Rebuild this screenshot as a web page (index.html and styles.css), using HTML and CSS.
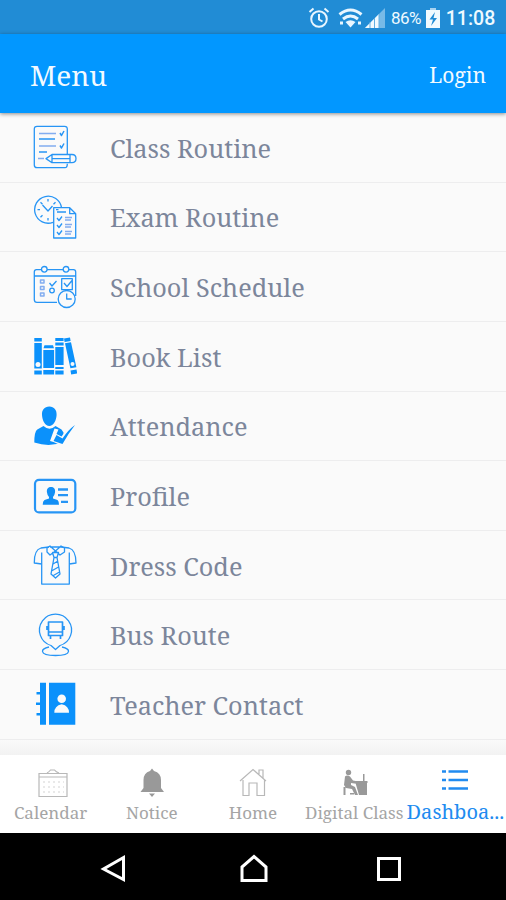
FILE: index.html
```html
<!DOCTYPE html>
<html lang="en">
<head>
<meta charset="utf-8">
<title>Menu</title>
<link rel="stylesheet" href="styles.css">
</head>
<body>
<div class="status">
  <svg class="alarm" width="22" height="22" viewBox="0 0 22 22" fill="none" stroke="#e9f6ff" stroke-width="2"><circle cx="11" cy="12" r="7.8"/><path d="M11 7v5.500l3.500 2M1.500 5l4-3.500M20.500 5l-4-3.500"/></svg>
  <svg class="wifi" width="25" height="22" viewBox="0 0 25 22" fill="none" stroke="#e9f6ff" stroke-width="3"><path d="M1.500 7.500Q12.500-1.500 23.500 7.500M5 12q7.500-6 15 0"/><path d="M7.500 15q5-3.500 10 0l-5 5.500z" fill="#e9f6ff" stroke="none"/><path d="M2 16h3M20 16h3"/></svg>
  <svg class="signal" width="20" height="20" viewBox="0 0 20 20"><path d="M20 0v20H0z" fill="#78bae7"/><path d="M14 6v14H0z" fill="#f1faff"/><path d="M5 14v6M9.500 10v10M14 6v14" stroke="#61afe2"/></svg>
  <span class="percent">86%</span>
  <svg class="battery" width="14" height="20" viewBox="0 0 14 20"><path d="M4 0h6v2H4z" fill="#a8d3f0"/><path d="M0 2h14v18H0z" fill="#f1faff"/><path d="M9 4L3.500 11.500H7L5 18l6-8H7.500z" fill="#218cd5"/></svg>
  <span class="clock">11:08</span>
</div>
<header class="header"><h1 class="title">Menu</h1><span class="login">Login</span></header>
<main class="list">
  <div class="row"><svg class="icon" viewBox="0 0 44 44"><path d="M34.300 29V4q0-2.700-2.700-2.700H4Q1.300 1.300 1.300 4v36q0 2.700 2.700 2.700h28q2.300 0 2.300-4"/><path d="M6 14h16M6 27h8" stroke-width="1.600"/><path class="soft" d="M6 8.500h17M6 21h17M5 33.500h6"/><path d="M27 8l1.500 2.500L31 6M27 20.500l1.500 2.500 2.500-4.500" stroke-width="1.500"/><path d="M13 33.600l6-4.100h20q4 0 4 4.100t-4 4.100H19zM19 29.500v8.200M37 29.500v8.200M19 33.600h18"/></svg><span class="label">Class Routine</span></div>
  <div class="row"><svg class="icon" viewBox="0 0 44 44"><path d="M20 27.300a13.500 13.500 0 1 1 8.500-14.600"/><path d="M15 4v2.500M15 23v2.500M4.500 14.700H7M23 14.700h2.500M7.500 7.200l2 2M22.500 7.200l-2 2M7.500 22.200l2-2M9.500 10l5.500 6 4.500-5"/><path d="M20.700 12.700h16l6 6V43h-22zM36.700 12.700v6h6M24 17h9"/><path d="M24 23l2 2.500 3-4M24 30l2 2.500 3-4M24 37l2 2.500 3-4"/><path class="soft" d="M32 22.500h7M32 25h6M32 29.500h7M32 32h6M32 36.500h7M32 39h6"/></svg><span class="label">Exam Routine</span></div>
  <div class="row"><svg class="icon" viewBox="0 0 44 44"><path d="M8.500 4.700H3.500Q1.300 4.700 1.300 7v27.500q0 2.900 2.700 2.900h20M14 4.700h16.300M35.700 4.700h4.800q2.200 0 2.200 2.300v24M1.300 11h41.400"/><circle cx="11.300" cy="4.300" r="2.800"/><circle cx="33" cy="4.300" r="2.800"/><path class="soft" d="M7.500 15h3.500v3H7.500zM7.500 21.500h3.500v3H7.500zM7.500 28h3.500v3H7.500z"/><path d="M16.500 18l2.500 3 4.500-5M28.700 13.700h10.600v11H28.700zM31 18l3 3.500 5-6"/><circle cx="19" cy="25.500" r="2.300"/><circle cx="33.700" cy="34" r="8.500"/><path d="M33.700 28.500V34h5"/></svg><span class="label">School Schedule</span></div>
  <div class="row"><svg class="icon solid" viewBox="0 0 44 44"><path d="M1.300 4h7.500v3.500H1.300zM1.300 9h7.500v25.500H1.300zM1.300 36.500h7.500V40.500H1.300zM11.500 11.300h8.500l1 3h-10.500zM10.300 16h10.800v18H10.300zM10.300 36h10.800v4.500H10.300zM22.300 4h8.300v3h-8.300zM22.300 8.500h8.300v3h-8.300zM22.300 13h8.300v18h-8.300zM22.300 33h8.300v2h-8.300zM22.300 36.500h8.300v4h-8.300zM31 4.500l6-1 .6 3.500-6 1zM32 9.300l6-1 5.400 25-6 1zM37.500 36.500l6-1 .7 4-6 1z"/><g class="cut"><circle cx="5" cy="30.500" r="2.500"/><circle cx="39.500" cy="30" r="2"/></g></svg><span class="label">Book List</span></div>
  <div class="row"><svg class="icon solid" viewBox="0 0 44 44"><path d="M16.300 2.500c5 0 7.600 3.600 7.300 8.500-.3 5.500-3.100 11-7.300 11S9.300 16.500 9 11c-.3-4.900 2.300-8.500 7.300-8.500z"/><path d="M10.500 22q6 5.500 12 0l6 3.500 2 3v9.500q-14 5.500-29.200.500 0-11 3-13z"/><path class="cut" d="M17 37l4.500-12.500 4 1-2 4.500 5 2.500Q34 24 43 19 34 29 29.500 42l-9-4z"/><path d="M20.500 37l3-6 6 3.500Q35 26 42 21q-7 9-12.500 19z"/></svg><span class="label">Attendance</span></div>
  <div class="row"><svg class="icon" viewBox="0 0 44 44"><rect x="2" y="5.800" width="40.300" height="32.600" rx="4" stroke-width="2.200"/><path class="fill" d="M18 13c3.500 0 4.500 2.500 4 5.500q-.5 3-2 4.500v1.500l4.500 1.500q1.500 1 1.500 4.800H9.700q0-3.800 1.800-4.800L16 24.500V23q-1.700-1.500-2-4.500c-.5-3 .5-5.500 4-5.500z"/><path d="M25 15.500h10M25 21.100h10M28 27.800h7" stroke-width="2.300"/></svg><span class="label">Profile</span></div>
  <div class="row"><svg class="icon" viewBox="0 0 44 44"><path d="M16 4L8 5Q1 7 1.300 20l7.400 1V9.500M8.700 20v21.100h27.600V9.500M36.300 21l6.700-1Q43 7 36 5l-8-1"/><path d="M14 5l3-2 5.500 5L28 3l3.500 2v4L27 12l-4.500-4-5.500 4-3-3zM17 4h11M19.500 9.500h6l-1.500 5h-3zM21 14.500L18 31l4.500 4 4.500-4-3-16.500M20 21l5-3M18.500 28l7-4M19.500 33l7-4"/></svg><span class="label">Dress Code</span></div>
  <div class="row"><svg class="icon" viewBox="0 0 44 44"><path d="M18 32.500l4.500 4 4.500-4a16 16 0 1 0-9 0z"/><path d="M16 34q-7 1.500-6.500 4.500.5 4 13 4t13-4Q36 35.500 29 34"/><path d="M15.500 9h14v13.500h-14zM15 19h15M14 13v4M31 13v4M17.500 23v3M27.500 23v3" stroke-width="1.700"/></svg><span class="label">Bus Route</span></div>
  <div class="row"><svg class="icon solid" viewBox="0 0 44 44"><path d="M7 .8h6v42H7zM16 .8h26.300v42H16zM3.500 10H7v2.500H3.500zM3 20.500h4V23H3zM3.500 31H7v2.500H3.500z"/><g class="cut"><circle cx="28.700" cy="16.800" r="4.300"/><path d="M21.300 30.800q0-7 7.400-8.500 7.300 1.500 7.300 8.500z"/></g></svg><span class="label">Teacher Contact</span></div>
</main>
<nav class="tabs">
  <div class="tab"><svg class="tabicon shifted" viewBox="0 0 30 30"><path class="faint" d="M1 5.500h28v23H1zM1 9h28M9 5q2-1 3.500-3h4Q18 4 21 5"/><path class="faint dots" d="M5 14h21M5 19h21M5 24h21"/></svg><span>Calendar</span></div>
  <div class="tab"><svg class="tabicon" viewBox="0 0 30 30"><path class="gray" d="M15 .5l2 2.500q7 2 7 9v8l3 4H3.500l3-4v-8q0-7 6.500-9zM12 25.500h6l-3 3.500z"/></svg><span>Notice</span></div>
  <div class="tab"><svg class="tabicon" viewBox="0 0 30 30"><path class="faint" d="M2 13L15 1.500 28 13M5 12v15.500h6V15h8v12.500h7.500V12M21 6V2h4v8"/></svg><span>Home</span></div>
  <div class="tab"><svg class="tabicon shifted" viewBox="0 0 30 30"><g class="gray"><circle cx="7.500" cy="4.500" r="2.700"/><path d="M4 8.500q2-2 5 0l3 4 5 1V16l-7-1v2l4 2 3 8h-3l-3-6-6-1-2-3zM14.500 15H26v12h-8zM2.500 19h2v8h-2zM22 6h1.500v8H22zM15 13h11.500v2H15zM9 25h4v1.500H9z"/></g></svg><span>Digital Class</span></div>
  <div class="tab active"><svg class="tabicon" viewBox="0 0 30 30"><path d="M8.500 3.500H28M8.500 12H28M8.500 20.500H28M2 3.500h4M2 12h4M2 20.500h4"/></svg><span>Dashboa...</span></div>
</nav>
<div class="system">
  <svg viewBox="0 0 30 30"><path d="M24.500 3.500v22L4.500 15z"/></svg>
  <svg viewBox="0 0 30 30"><path d="M3 26.500V13L15 2.500 27 13v13.500z"/></svg>
  <svg viewBox="0 0 30 30"><rect x="4.500" y="4.500" width="21" height="21"/></svg>
</div>
</body>
</html>
```
FILE: styles.css
```css
* { box-sizing: border-box; }
body { margin: 0; width: 506px; height: 900px; overflow: hidden; display: flex; flex-direction: column; background: #fafafa; font-family: "Noto Serif", "DejaVu Serif Condensed", "DejaVu Serif", serif; }
svg { display: block; flex: none; }
.status { height: 34px; flex: none; background: #218cd5; display: flex; align-items: center; padding: 2px 11px 0 308px; color: #effaff; font-family: Roboto, sans-serif; white-space: nowrap; }
.wifi { margin-left: 8px; }
.signal { margin-left: 2px; }
.percent { width: 32px; margin-left: 6px; font-size: 17px; letter-spacing: -.6px; }
.battery { margin-left: 5px; }
.clock { margin-left: 6px; font-size: 19.5px; font-weight: 500; }
.header { height: 79px; flex: none; background: #0297ff; box-shadow: 0 1px 4px rgba(0,0,0,.45); display: flex; align-items: center; justify-content: space-between; padding: 2px 20px 0 30px; color: #f2faff; position: relative; }
.title { margin: 0; font-size: 28px; font-weight: 400; }
.login { font-size: 21px; padding-top: 1px; }
.list { height: 642px; flex: none; background: linear-gradient(#fafafa 0, #fafafa 626px, #f2f2f2 642px); }
.row { height: 69.65px; display: flex; align-items: center; padding-left: 33px; border-bottom: 1.5px solid #ededee; }
.icon { width: 44px; height: 44px; margin-right: 33px; fill: none; stroke: #2795f5; stroke-width: 1.3; stroke-linejoin: round; }
.solid { fill: #0b91fb; stroke: none; }
.fill { fill: #128ff5; stroke: none; }
.soft { stroke: #83adf0; stroke-width: 1.5; }
.cut { fill: #fafafa; stroke: none; }
.label { color: #7c869b; font-size: 25.3px; white-space: nowrap; padding-top: 1px; }
.tabs { height: 78px; flex: none; background: #fff; display: grid; grid-template-columns: repeat(5, 1fr); }
.tab { display: flex; flex-direction: column; align-items: center; padding-top: 13px; color: #a5a5a5; font-size: 17px; line-height: 24px; white-space: nowrap; min-width: 0; }
.tabicon { width: 30px; height: 30px; margin-bottom: 3px; }
.shifted { margin-left: 4px; }
.faint { fill: none; stroke: #b8b8b8; stroke-width: 1.2; }
.dots { stroke-dasharray: 2 3; stroke: #d3d3d3; }
.gray { fill: #999; }
.active { color: #218bf0; font-size: 20px; }
.active .tabicon { stroke: #218bf0; stroke-width: 2.5; }
.active span { margin-top: -1px; }
.system { height: 67px; flex: none; background: #000; display: flex; align-items: center; justify-content: space-between; padding: 5px 102px 0 99px; }
.system svg { width: 30px; height: 30px; fill: none; stroke: #fff; stroke-width: 3; }
.system svg:nth-child(2) { margin-left: 4px; }
```
